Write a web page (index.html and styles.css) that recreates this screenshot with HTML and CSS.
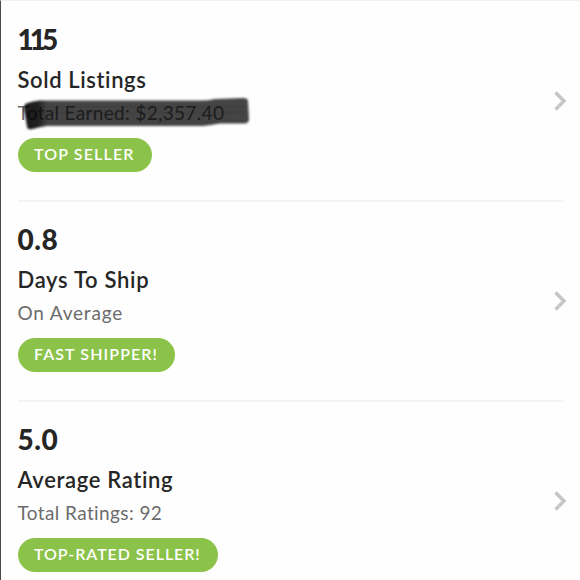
FILE: index.html
```html
<!DOCTYPE html>
<html lang="en">
<head>
    <meta charset="UTF-8">
    <meta name="viewport" content="width=device-width, initial-scale=1.0">
    <title>Seller Stats</title>
    <link rel="stylesheet" href="styles.css">
</head>
<body>
    <main class="stats">
        <section class="stat">
            <div class="stat-body">
                <div class="stat-value value-sold">115</div>
                <h2 class="stat-title title-sold">Sold Listings</h2>
                <p class="stat-note note-sold">Total Earned: $2,357.40
                    <svg class="marker" width="236" height="40" viewBox="0 0 236 40">
                        <defs>
                            <filter id="soft" x="-5%" y="-20%" width="110%" height="140%">
                                <feGaussianBlur stdDeviation="0.9"/>
                            </filter>
                            <linearGradient id="edge" x1="0" x2="1" y1="0" y2="0">
                                <stop offset="0" stop-color="#000" stop-opacity="0.6"/>
                                <stop offset="0.6" stop-color="#000" stop-opacity="0.55"/>
                                <stop offset="1" stop-color="#000" stop-opacity="0"/>
                            </linearGradient>
                        </defs>
                        <g filter="url(#soft)">
                            <path class="marker-stroke" d="M10 9 Q17 6 26 5.5 H180 Q192 6 200 4 L228 3 Q233 3 233 6 L234 24 Q234 28 230 28.500 H205 Q196 30 188 31 H32 Q24 32 17 34 Q12 35 12 31 L9 14 Z"/>
                            <path fill="url(#edge)" d="M10 9 Q17 6 24 5.5 H32 V31 Q24 32 17 34 Q12 35 12 31 L9 14 Z"/>
                            <path class="marker-streak" d="M28 12 H231 M28 18 H232 M28 26 H229"/>
                        </g>
                    </svg>
                </p>
                <span class="badge badge-sold">TOP SELLER</span>
            </div>
            <svg class="chevron" width="14" height="22" viewBox="0 0 14 22"><path d="M2.500 2.500 L11 11 L2.500 19.500"/></svg>
        </section>
        <section class="stat">
            <div class="stat-body">
                <div class="stat-value">0.8</div>
                <h2 class="stat-title title-ship">Days To Ship</h2>
                <p class="stat-note note-ship">On Average</p>
                <span class="badge badge-ship">FAST SHIPPER!</span>
            </div>
            <svg class="chevron" width="14" height="22" viewBox="0 0 14 22"><path d="M2.500 2.500 L11 11 L2.500 19.500"/></svg>
        </section>
        <section class="stat">
            <div class="stat-body">
                <div class="stat-value">5.0</div>
                <h2 class="stat-title title-rating">Average Rating</h2>
                <p class="stat-note note-rating">Total Ratings: 92</p>
                <span class="badge badge-rating">TOP-RATED SELLER!</span>
            </div>
            <svg class="chevron" width="14" height="22" viewBox="0 0 14 22"><path d="M2.500 2.500 L11 11 L2.500 19.500"/></svg>
        </section>
    </main>
</body>
</html>
```

FILE: styles.css
```css
* {
    box-sizing: border-box;
}

body {
    margin: 0;
    height: 580px;
    overflow: hidden;
    background: #fefefe;
    color: #262626;
    font-family: Lato, "Liberation Sans", sans-serif;
    font-variant-ligatures: none;
}

.stats {
    height: 580px;
    overflow: hidden;
    padding: 1px 17px 0 16.5px;
    border-top: 1px solid #f1f1f0;
    border-left: 1px solid #4a4a4c;
}

.stat {
    display: flex;
    justify-content: space-between;
    align-items: center;
    height: 200px;
    border-bottom: 2px solid #f4f4f3;
}

.stat-body {
    display: flex;
    flex-direction: column;
    align-items: flex-start;
    height: 100%;
    padding-top: 18px;
    white-space: nowrap;
}

.stat-value {
    height: 41px;
    line-height: 39px;
    font-size: 28px;
    font-weight: 900;
    letter-spacing: 0.5px;
}

.value-sold {
    letter-spacing: -4px;
}

.stat-title {
    margin: 0;
    height: 38px;
    line-height: 38px;
    font-size: 22px;
    font-weight: 600;
}

.title-sold {
    letter-spacing: 0.6px;
}

.title-ship {
    letter-spacing: 0.7px;
}

.title-rating {
    letter-spacing: 0.65px;
}

.stat-note {
    position: relative;
    margin: 0;
    height: 28px;
    line-height: 28px;
    font-size: 19px;
    color: #6c6c6c;
}

.note-sold {
    letter-spacing: 0.33px;
}

.note-ship {
    letter-spacing: 0.8px;
}

.note-rating {
    letter-spacing: 0.4px;
}

.badge {
    height: 34px;
    margin-top: 11px;
    padding: 0 16.5px;
    border-radius: 17px;
    background: #8bc34a;
    color: #fff;
    font-size: 16px;
    font-weight: 600;
    line-height: 32px;
}

.badge-sold {
    width: 134.5px;
    letter-spacing: 1.15px;
}

.badge-ship {
    width: 157.5px;
    letter-spacing: 1.1px;
}

.badge-rating {
    width: 200px;
    letter-spacing: 0.95px;
}

/* marker drawn over the earnings */
.marker {
    position: absolute;
    left: -2.5px;
    top: -4px;
}

.marker-stroke {
    fill: rgba(0, 0, 0, 0.73);
}

.marker-streak {
    fill: none;
    stroke: rgba(0, 0, 0, 0.1);
    stroke-width: 2;
}

.chevron {
    margin-right: -4px;
    fill: none;
    stroke: #c6c6c8;
    stroke-width: 3.5;
}
```
